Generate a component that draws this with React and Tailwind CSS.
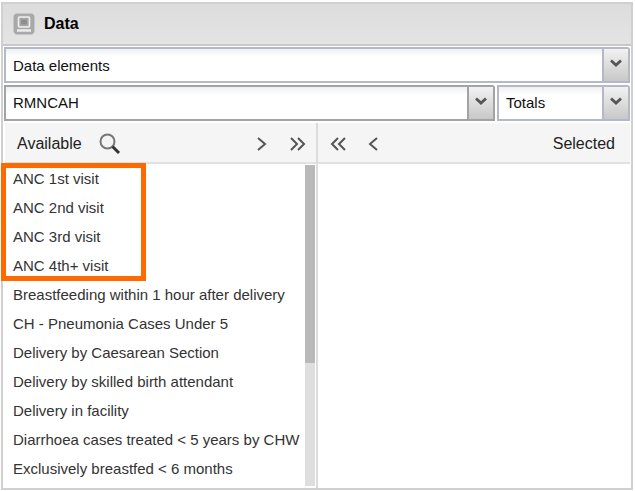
const items = [
  'ANC 1st visit',
  'ANC 2nd visit',
  'ANC 3rd visit',
  'ANC 4th+ visit',
  'Breastfeeding within 1 hour after delivery',
  'CH - Pneumonia Cases Under 5',
  'Delivery by Caesarean Section',
  'Delivery by skilled birth attendant',
  'Delivery in facility',
  'Diarrhoea cases treated < 5 years by CHW',
  'Exclusively breastfed < 6 months',
];

const Trigger = ({ border }) => (
  <div className={`w-[26px] shrink-0 flex items-start justify-center pt-[10px] rounded-tr-[3px] bg-gradient-to-b from-[#f2f2f2] to-[#c8c8c8] border-l-2 ${border}`}>
    <svg width="14" height="9" viewBox="0 0 14 9">
      <path d="M2 1.5 L7 6 L12 1.5" fill="none" stroke="#555" strokeWidth="2.8" />
    </svg>
  </div>
);

const Combo = ({ value, border, className, textClass }) => (
  <div className={`flex h-[36px] ${className}`}>
    <div className={`flex-1 flex items-center pl-[7px] border-2 border-r-0 bg-white bg-gradient-to-b from-[#eef0f2] via-white via-[25%] to-white text-[15px] text-[#111] ${border} ${textClass}`}>
      {value}
    </div>
    <div className={`flex border-y-2 border-r-2 rounded-tr-[3px] ${border}`}>
      <Trigger border={border} />
    </div>
  </div>
);

const Chevron = ({ d }) => (
  <svg width="16" height="18" viewBox="0 0 16 18">
    <path d={d} fill="none" stroke="#555" strokeWidth="2" />
  </svg>
);

const App = () => (
  <div className="relative w-[635px] h-[491px] overflow-hidden bg-white font-['Liberation_Sans',Arial,sans-serif]">
    <div className="mt-[2px] ml-px w-[632px] h-[488px] border-2 border-[#d0d0d0] flex flex-col">
      <div className="h-[42px] shrink-0 flex items-center pl-[10px] bg-gradient-to-b from-[#dcdcdc] to-[#e4e4e4] border-b-2 border-[#c8c8c8]">
        <svg width="22" height="22" viewBox="0 0 22 22">
          <rect x="0.5" y="0.5" width="21" height="21" rx="4" fill="#a9a9a9" />
          <rect x="5.5" y="4" width="11" height="10" rx="1" fill="none" stroke="#efefef" strokeWidth="1.6" />
          <rect x="8" y="6.5" width="6" height="5" fill="#8f8f8f" />
          <path d="M4 17.5h14" stroke="#efefef" strokeWidth="2.4" />
        </svg>
        <span className="ml-[9px] text-[16px] font-bold text-black">Data</span>
      </div>

      <div className="flex flex-col gap-[2px] pt-[1px] pl-px pr-[1px]">
        <Combo value="Data elements" border="border-[#b5b8c8]" textClass="pt-[2px]" />
        <div className="flex gap-[2px]">
          <Combo value="RMNCAH" border="border-[#a3a3a3]" className="flex-1" />
          <Combo value="Totals" border="border-[#b5b8c8]" className="w-[133px]" />
        </div>
      </div>

      <div className="flex flex-1 min-h-0 mt-[2px] ml-[2px] mr-px">
        <div className="w-[313px] flex flex-col border-r-2 border-[#dcdcdc]">
          <div className="h-[41px] shrink-0 flex items-center pt-[2px] pl-[12px] pr-[9px] bg-[#f5f5f5] border-b-2 border-[#e2e2e2]">
            <span className="text-[16px] text-[#222]">Available</span>
            <svg className="ml-[16px]" width="24" height="24" viewBox="0 0 24 24">
              <circle cx="9.5" cy="9.5" r="7" fill="#f4f4f4" stroke="#777" strokeWidth="2" />
              <path d="M14.5 14.5 L21 21" stroke="#333" strokeWidth="3" />
            </svg>
            <div className="ml-auto flex gap-[19px]">
              <Chevron d="M4 3 L11 9 L4 15" />
              <svg width="18" height="18" viewBox="0 0 18 18">
                <path d="M2 3 L8 9 L2 15 M9 3 L15 9 L9 15" fill="none" stroke="#555" strokeWidth="2" />
              </svg>
            </div>
          </div>
          <div className="flex-1 min-h-0 flex overflow-hidden">
            <ul className="flex-1 pl-[8px] text-[15px] text-[#333]">
              {items.map((item) => (
                <li key={item} className="h-[29px] leading-[29px] whitespace-nowrap">{item}</li>
              ))}
            </ul>
            <div className="w-[10px] mr-px mt-px mb-[2px] bg-[#dedede]">
              <div className="h-[198px] bg-[#b9b9b9]" />
            </div>
          </div>
        </div>
        <div className="flex-1 flex flex-col">
          <div className="h-[41px] shrink-0 flex items-center pt-[2px] pl-[12px] pr-[15px] bg-[#f5f5f5] border-b-2 border-[#e2e2e2]">
            <svg width="18" height="18" viewBox="0 0 18 18">
              <path d="M8 3 L2 9 L8 15 M15 3 L9 9 L15 15" fill="none" stroke="#555" strokeWidth="2" />
            </svg>
            <div className="ml-[18px]">
              <Chevron d="M11 3 L4 9 L11 15" />
            </div>
            <span className="ml-auto text-[16px] text-[#222]">Selected</span>
          </div>
        </div>
      </div>
    </div>

    <div className="absolute left-px top-[163px] w-[145px] h-[118px] border-[5px] border-[#ff6a00]" />
  </div>
);

export default App;
